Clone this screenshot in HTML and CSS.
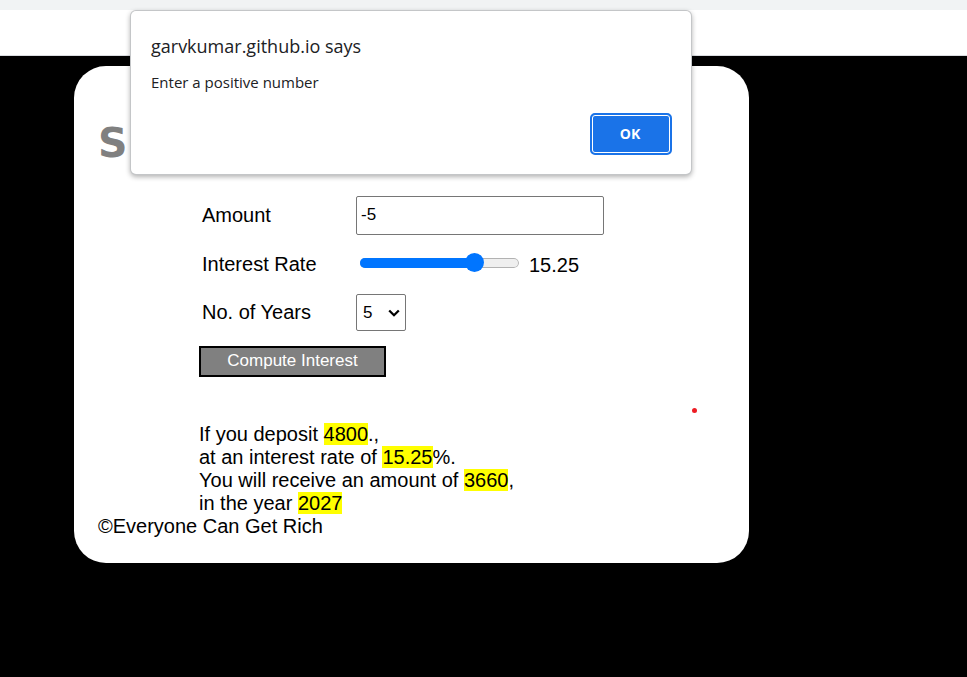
FILE: index.html
```html
<!DOCTYPE html>
<html lang="en">
<head>
<meta charset="utf-8">
<meta name="viewport" content="width=device-width, initial-scale=1">
<link rel="stylesheet" href="styles.css">
</head>
<body>
<header class="browser-bar"></header>
<main class="page">
  <section class="card">
    <h1 class="title">Si</h1>
    <form class="calculator">
      <div class="fields">
        <label for="amount">Amount</label>
        <input class="amount" id="amount" type="text" value="-5">
        <label for="rate">Interest Rate</label>
        <div class="rate-row">
          <input class="rate" id="rate" type="range" min="1" max="20" step="0.25" value="15.25">
          <output class="rate-value" for="rate">15.25</output>
        </div>
        <label for="years">No. of Years</label>
        <div class="select-wrap">
          <select class="years" id="years"><option selected>5</option></select>
          <svg class="chevron" viewBox="0 0 12 8" aria-hidden="true"><path d="M1.200 1.500 6 6.200l4.800-4.700"/></svg>
        </div>
      </div>
      <button class="compute" type="button">Compute Interest</button>
    </form>
    <div class="result">
      If you deposit <mark>4800</mark>.,<br>
      at an interest rate of <mark>15.25</mark>%.<br>
      You will receive an amount of <mark>3660</mark>,<br>
      in the year <mark>2027</mark>
    </div>
    <footer>©Everyone Can Get Rich</footer>
    <span class="pointer-dot"></span>
  </section>
</main>
<div class="dialog" role="alertdialog" aria-labelledby="origin" aria-describedby="message">
  <h2 class="origin" id="origin">garvkumar.github.io says</h2>
  <p class="message" id="message">Enter a positive number</p>
  <button class="ok" type="button">OK</button>
</div>
</body>
</html>
```
FILE: styles.css
```css
* { box-sizing: border-box; }
body {
  display: flex;
  flex-direction: column;
  min-height: 100vh;
  margin: 0;
  background: #000;
  color: #000;
  font: 20px/23px "Liberation Sans", Arial, sans-serif;
}
.browser-bar {
  height: 56px;
  background: #fff;
  border-top: 10px solid #f1f3f4;
  border-bottom: 1px solid #dadce0;
}
.page { padding: 10px 74px; }
.card {
  position: relative;
  max-width: 675px;
  padding: 25px 24px;
  background: #fff;
  border-radius: 32px;
}
.title {
  margin: 28px 0;
  color: #808080;
  font: bold 41px/49px "DejaVu Sans", Verdana, sans-serif;
}
.calculator { padding-left: 101px; }
.fields {
  display: grid;
  grid-template-columns: 154px 1fr;
  gap: 10px 0;
  align-items: center;
  padding-left: 3px;
}
.amount, .years {
  background: #fff;
  border: 1px solid #767676;
  border-radius: 2px;
  color: #000;
  font: 17px/20px "Liberation Sans", Arial, sans-serif;
}
.amount {
  width: 248px;
  height: 39px;
  padding: 0 4px 2px;
}
.rate-row {
  display: flex;
  align-items: center;
  gap: 10px;
  height: 39px;
  padding-left: 4px;
}
.rate {
  appearance: none;
  width: 159px;
  height: 10px;
  margin: 0 0 4px;
  border-radius: 5px;
  background: linear-gradient(to right, #0075ff 73%, transparent 73%), #efefef;
  box-shadow: inset 0 0 0 1px #b2b2b2;
  background-clip: border-box;
}
.rate::-webkit-slider-runnable-track {
  height: 10px;
  border-radius: 5px;
  background: linear-gradient(to right, #0075ff 73%, transparent 73%);
}
.rate::-webkit-slider-thumb {
  appearance: none;
  width: 19px;
  height: 19px;
  margin-top: -5px;
  border-radius: 50%;
  background: #0075ff;
}
.rate-value { padding-top: 2px; }
.select-wrap {
  position: relative;
  width: 50px;
}
.years {
  display: block;
  appearance: none;
  width: 100%;
  height: 37px;
  padding: 0 6px;
}
.chevron {
  position: absolute;
  right: 6px;
  top: 15px;
  width: 12px;
  height: 8px;
  fill: none;
  stroke: #000;
  stroke-width: 2.3;
  pointer-events: none;
}
.compute {
  display: block;
  width: 187px;
  height: 31px;
  margin-top: 15px;
  padding: 0 0 2px;
  background: #808080;
  border: 2px solid #000;
  color: #fff;
  font: 17px/20px "Liberation Sans", Arial, sans-serif;
}
.result { padding: 46px 0 0 101px; }
mark { background: #ff0; color: #000; }
.pointer-dot {
  position: absolute;
  right: 52px;
  top: 342px;
  width: 5px;
  height: 5px;
  border-radius: 50%;
  background: #ed1c24;
}
.dialog {
  position: absolute;
  left: 131px;
  top: 11px;
  display: flex;
  flex-direction: column;
  width: 560px;
  padding: 23px 19px 19px 20px;
  background: #fff;
  border-radius: 5px;
  box-shadow: 0 0 0 1px #c4c6c8, 0 2px 5px 1px rgba(0, 0, 0, 0.3);
  color: #202124;
  font-family: "Open Sans", "Noto Sans", sans-serif;
}
.origin {
  margin: 0;
  font-size: 18px;
  font-weight: 400;
  line-height: 24px;
}
.message {
  margin: 12px 0 19px;
  font-size: 15px;
  line-height: 24px;
}
.ok {
  align-self: flex-end;
  width: 82px;
  height: 42px;
  padding: 0 2px 0 0;
  background: #1a73e8;
  border: 2px solid #1a73e8;
  border-radius: 5px;
  box-shadow: inset 0 0 0 1px #fff;
  color: #fff;
  font: bold 14px/20px "Open Sans", sans-serif;
}
```
